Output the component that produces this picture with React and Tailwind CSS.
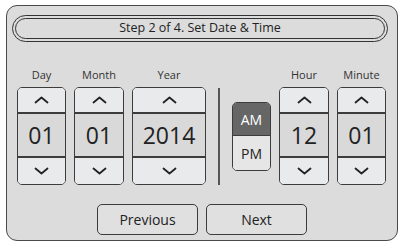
import React from "react";

const font = { fontFamily: '"Open Sans", "Noto Sans", sans-serif' };

function Chevron({ down }) {
  return (
    <svg width="15" height="8" viewBox="0 0 15 8" className="block">
      <path
        d={down ? "M1.5 1.5 L7.5 6.5 L13.5 1.5" : "M1.5 6.5 L7.5 1.5 L13.5 6.5"}
        fill="none"
        stroke="#222"
        strokeWidth="1.8"
        strokeLinecap="round"
        strokeLinejoin="round"
      />
    </svg>
  );
}

function Spinner({ label, value, width }) {
  return (
    <div className="flex flex-col items-center" style={{ width }}>
      <div className="text-[11px] leading-[14px] text-[#333] mb-[5px]">{label}</div>
      <div className="w-full h-[98px] border border-[#3c3c3c] rounded-[5px] overflow-hidden flex flex-col">
        <div className="h-[26px] bg-[#e9eaec] flex items-center justify-center border-b-2 border-[#3c3c3c]">
          <Chevron />
        </div>
        <div className="flex-1 bg-[#d9d9d9] flex items-center justify-center text-[23px] leading-none text-[#222] border-b-2 border-[#3c3c3c]">
          {value}
        </div>
        <div className="h-[26px] bg-[#e9eaec] flex items-center justify-center">
          <Chevron down />
        </div>
      </div>
    </div>
  );
}

export default function App() {
  return (
    <div className="w-[401px] h-[245px] bg-white pt-[5px] pl-[6px]" style={font}>
      <div className="w-[392px] h-[236px] bg-[#dcdcdc] border border-[#4a4a4a] rounded-[11px] flex flex-col">
        <div className="mt-[9px] ml-[5px] w-[376px] h-[27px] rounded-full border border-[#333] p-[2px]">
          <div className="h-full rounded-full border border-[#333] flex items-center justify-center text-[12.5px] text-[#222]">
            Step 2 of 4. Set Date &amp; Time
          </div>
        </div>

        <div className="flex items-end pl-[10px] mt-[26px]">
          <Spinner label="Day" value="01" width={49} />
          <div className="ml-[8px]">
            <Spinner label="Month" value="01" width={50} />
          </div>
          <div className="ml-[8px]">
            <Spinner label="Year" value="2014" width={74} />
          </div>
          <div className="ml-[12px] w-[2px] h-[97px] bg-[#555]" />
          <div className="ml-[12px] mb-[14px] w-[39px] h-[69px] border border-[#3c3c3c] rounded-[5px] overflow-hidden flex flex-col">
            <div className="h-[33px] bg-[#666666] text-white text-[14px] flex items-center justify-center border-b border-[#3c3c3c]">
              AM
            </div>
            <div className="flex-1 bg-[#e6e6e6] text-[#222] text-[14px] flex items-center justify-center">
              PM
            </div>
          </div>
          <div className="ml-[8px]">
            <Spinner label="Hour" value="12" width={50} />
          </div>
          <div className="ml-[8px]">
            <Spinner label="Minute" value="01" width={49} />
          </div>
        </div>

        <div className="flex justify-center gap-[8px] mt-[19px]">
          <button className="w-[101px] h-[31px] rounded-[5px] border border-[#3c3c3c] bg-[#e0e0e0] text-[14px] text-[#222]">
            Previous
          </button>
          <button className="w-[101px] h-[31px] rounded-[5px] border border-[#3c3c3c] bg-[#e0e0e0] text-[14px] text-[#222]">
            Next
          </button>
        </div>
      </div>
    </div>
  );
}
